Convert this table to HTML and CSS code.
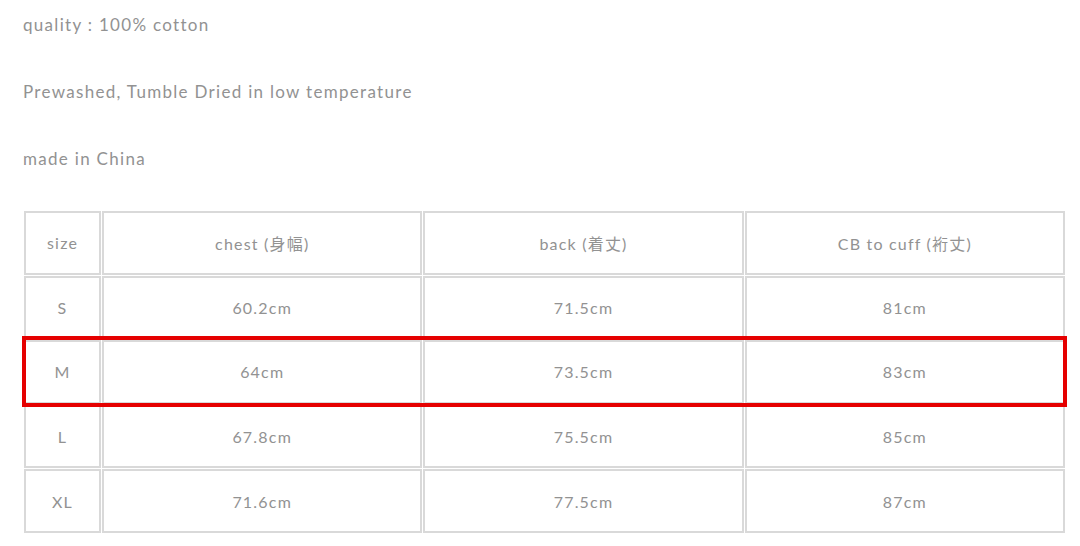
FILE: index.html
```html
<!DOCTYPE html>
<html lang="en">
<head>
<meta charset="utf-8">
<link rel="stylesheet" href="styles.css">
</head>
<body>
<div class="page">
  <p class="note">quality : 100% cotton</p>
  <p class="note">Prewashed, Tumble Dried in low temperature</p>
  <p class="note">made in China</p>
  <div class="table-wrap">
    <table class="sizes">
      <colgroup>
        <col class="c-size"><col class="c-val"><col class="c-val"><col class="c-val">
      </colgroup>
      <tr><td>size</td><td>chest (身幅)</td><td>back (着丈)</td><td>CB to cuff (裄丈)</td></tr>
      <tr><td>S</td><td>60.2cm</td><td>71.5cm</td><td>81cm</td></tr>
      <tr><td>M</td><td>64cm</td><td>73.5cm</td><td>83cm</td></tr>
      <tr><td>L</td><td>67.8cm</td><td>75.5cm</td><td>85cm</td></tr>
      <tr><td>XL</td><td>71.6cm</td><td>77.5cm</td><td>87cm</td></tr>
    </table>
    <div class="highlight"></div>
  </div>
</div>
</body>
</html>
```

FILE: styles.css
```css
html, body {
  margin: 0;
  padding: 0;
  background: #ffffff;
}
body {
  font-family: "Lato", "Noto Sans CJK JP", sans-serif;
  color: #929292;
}
.page {
  padding: 15px 0 0 23px;
}
.note {
  margin: 0 0 47px 0;
  font-size: 17px;
  line-height: 20px;
  letter-spacing: 1.3px;
}
.note:nth-of-type(3) {
  margin-bottom: 0;
}
.table-wrap {
  position: relative;
  margin-top: 41px;
  width: 1043px;
}
.sizes {
  border-collapse: separate;
  border-spacing: 1px;
  table-layout: fixed;
  width: 1043px;
}
.c-size { width: 77px; }
.c-val { width: 320px; }
.sizes td {
  border: 2px solid #d9d9d9;
  height: 63.6px;
  padding: 0;
  text-align: center;
  vertical-align: middle;
  font-size: 16px;
  letter-spacing: 1.2px;
  box-sizing: border-box;
}
.highlight {
  position: absolute;
  left: -1px;
  top: 126px;
  width: 1045px;
  height: 71px;
  box-sizing: border-box;
  border: 4px solid #e50000;
}
```
